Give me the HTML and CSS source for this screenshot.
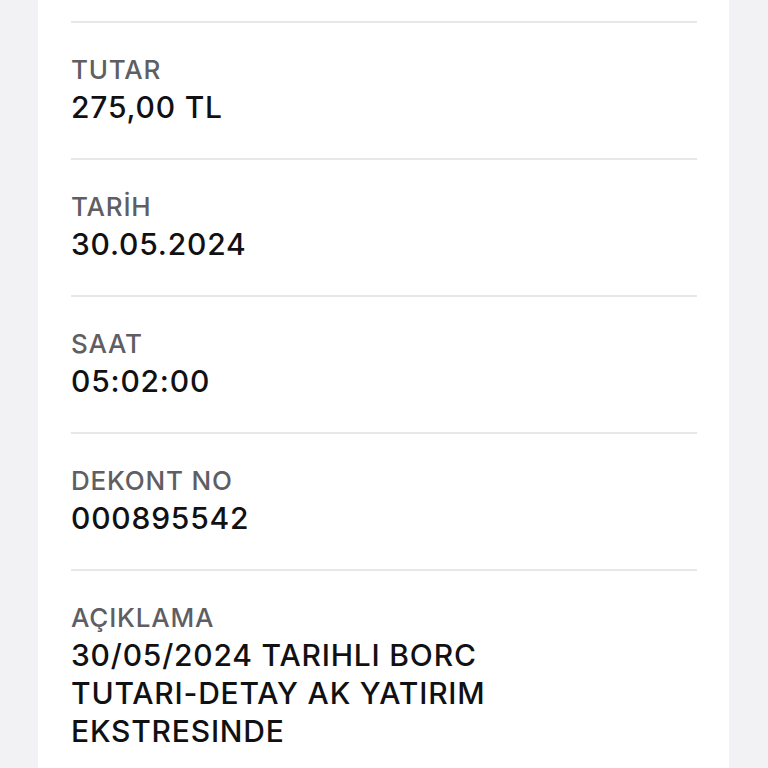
FILE: index.html
```html
<!DOCTYPE html>
<html lang="tr">
<head>
  <meta charset="UTF-8">
  <title>Dekont detayı</title>
  <link rel="stylesheet" href="styles.css">
</head>
<body>
<main class="page">
  <section class="card">
    <div class="row">
      <div class="label">TUTAR</div>
      <div class="value">275,00 TL</div>
    </div>
    <div class="row">
      <div class="label">TARİH</div>
      <div class="value">30.05.2024</div>
    </div>
    <div class="row">
      <div class="label">SAAT</div>
      <div class="value">05:02:00</div>
    </div>
    <div class="row">
      <div class="label">DEKONT NO</div>
      <div class="value">000895542</div>
    </div>
    <div class="row">
      <div class="label">AÇIKLAMA</div>
      <div class="value">30/05/2024 TARIHLI BORC TUTARI-DETAY AK YATIRIM EKSTRESINDE</div>
    </div>
  </section>
</main>
</body>
</html>
```

FILE: styles.css
```css
body {
  margin: 0;
  background: #f2f2f5;
  font-family: Inter, "Noto Sans", sans-serif;
}

.page {
  height: 768px;
  overflow: hidden;
}

.card {
  margin-left: 38px;
  width: 691px;
  min-height: 768px;
  background: #fff;
  padding: 21px 32px 0 33px;
  box-sizing: border-box;
}

.row {
  border-top: 2px solid #e7e7ea;
  padding: 32px 0 32px;
}

.label {
  font-size: 26px;
  line-height: 30px;
  font-weight: 500;
  letter-spacing: 0.8px;
  color: #5e5e63;
}

.value {
  margin-top: 3px;
  font-size: 30px;
  line-height: 38px;
  font-weight: 500;
  letter-spacing: 0.8px;
  color: #111114;
  max-width: 440px;
}
```
